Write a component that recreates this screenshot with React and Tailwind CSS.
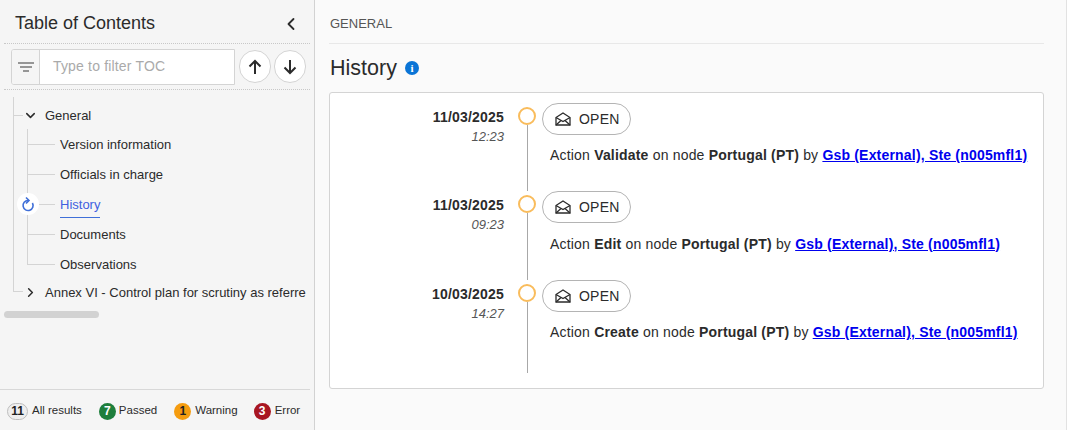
import React from "react";
import { ChevronLeft, ChevronDown, ChevronRight } from "lucide-react";

const children = ["Version information", "Officials in charge", "History", "Documents", "Observations"];

const entries = [
  { date: "11/03/2025", time: "12:23", action: "Validate", user: "Gsb (External), Ste (n005mfl1)", rowClass: "h-[88.5px]" },
  { date: "11/03/2025", time: "09:23", action: "Edit", user: "Gsb (External), Ste (n005mfl1)", rowClass: "h-[88.5px]" },
  { date: "10/03/2025", time: "14:27", action: "Create", user: "Gsb (External), Ste (n005mfl1)", rowClass: "h-[93px]" },
];

const badges = [
  { count: 11, label: "All results", cls: "w-[21px] bg-[#eeeeee] border border-[#bdbdbd] text-[#212121]", gap: "", labelGap: "ml-[4px]" },
  { count: 7, label: "Passed", cls: "w-[17px] bg-[#1e7e3c] text-white", gap: "ml-[17px]", labelGap: "ml-[3px]" },
  { count: 1, label: "Warning", cls: "w-[17px] bg-[#f59c0f] text-[#212121]", gap: "ml-[17px]", labelGap: "ml-[4px]" },
  { count: 3, label: "Error", cls: "w-[17px] bg-[#a81622] text-white", gap: "ml-[16px]", labelGap: "ml-[4px]" },
];

const RefreshIcon = () => (
  <svg width="14" height="16" viewBox="0 0 14 16" fill="none" stroke="#3f6fd8" strokeWidth="1.6">
    <path d="M7 4.5A5 5 0 1 0 11.4 7" />
    <path d="M5 1.5L8 4.5L5 7.5" />
  </svg>
);

const EnvelopeIcon = () => (
  <svg width="16" height="14" viewBox="0 0 16 14" fill="none" stroke="#2b2b2b" strokeWidth="1.3" className="shrink-0">
    <path d="M1 5.5L8 1L15 5.5V13H1Z" />
    <path d="M1 5.5L8 9.5L15 5.5" />
    <path d="M1 13L6 8.5M15 13L10 8.5" />
  </svg>
);

const ArrowIcon = ({ down }) => (
  <svg width="14" height="16" viewBox="0 0 14 16" fill="none" stroke="#2b2b2b" strokeWidth="2" className={down ? "rotate-180" : ""}>
    <path d="M7 15V2M1.5 7.5L7 2L12.5 7.5" />
  </svg>
);

const TreeChild = ({ label, isLast }) => {
  const active = label === "History";
  return (
    <div className="relative flex h-[30px] items-center">
      <span className={`absolute left-0 top-0 w-px bg-[#d4d4d4] ${isLast ? "h-[15px]" : "h-[30px]"}`} />
      <span className="h-px w-[28px] bg-[#d4d4d4]" />
      {active && (
        <span className="absolute left-[-10px] top-[4px] flex h-[22px] w-[22px] items-center justify-center rounded-full bg-white">
          <RefreshIcon />
        </span>
      )}
      <span
        className={`ml-[5px] text-[13px] leading-[21px] ${
          active ? "border-b border-[#3f6fd8] pb-[2px] pt-[3px] text-[#3f5fe0]" : "text-[#2b2b2b]"
        }`}
      >
        {label}
      </span>
    </div>
  );
};

const Sidebar = () => (
  <aside className="flex h-[430px] w-[315px] shrink-0 flex-col border-r border-[#d2d2d2] bg-[#f5f5f5]">
    <div className="mx-[4px] flex h-[44px] w-[306px] shrink-0 items-center justify-between border-b border-dotted border-[#c8c8c8] pl-[11px] pr-[9px] pt-[4px]">
      <span className="text-[18px] text-[#2b2b2b]">Table of Contents</span>
      <ChevronLeft size={20} strokeWidth={2.2} className="text-[#2b2b2b]" />
    </div>

    <div className="mx-[4px] flex h-[46px] w-[306px] shrink-0 items-center border-b border-dotted border-[#c8c8c8] pl-[7px]">
      <div className="flex h-[36px] w-[224px] overflow-hidden rounded-l-[3px] border border-[#d4d4d4] bg-white">
        <div className="flex w-[28px] items-center justify-center border-r border-[#d4d4d4] bg-[#f5f5f5]">
          <svg width="16" height="10" viewBox="0 0 16 10" className="text-[#777777]">
            <path d="M0 1h16M2 5h12M5 9h6" stroke="currentColor" strokeWidth="1.5" />
          </svg>
        </div>
        <span className="flex items-center pl-[13px] text-[14px] tracking-[0.17px] text-[#aaaaaa]">Type to filter TOC</span>
      </div>
      <button className="ml-[4px] flex h-[33px] w-[32px] items-center justify-center rounded-full border border-[#d4d4d4] bg-white">
        <ArrowIcon />
      </button>
      <button className="ml-[3px] flex h-[33px] w-[32px] items-center justify-center rounded-full border border-[#d4d4d4] bg-white">
        <ArrowIcon down />
      </button>
    </div>

    <div className="ml-[13px] mt-[7px] w-[296px] overflow-hidden">
      <div className="border-l border-[#d4d4d4]">
        <div className="flex h-[32px] items-center pt-[5px]">
          <span className="h-px w-[9px] bg-[#d4d4d4]" />
          <ChevronDown size={15} strokeWidth={2.4} className="text-[#2b2b2b]" />
          <span className="ml-[7px] text-[13px] text-[#2b2b2b]">General</span>
        </div>
        <div className="ml-[13px]">
          {children.map((label, i) => (
            <TreeChild key={label} label={label} isLast={i === children.length - 1} />
          ))}
        </div>
      </div>
      <div className="flex h-[27px] items-center whitespace-nowrap">
        <span className="h-[13px] w-[10px] self-start border-b border-l border-[#d4d4d4]" />
        <ChevronRight size={15} strokeWidth={2.4} className="text-[#2b2b2b]" />
        <span className="ml-[7px] text-[13px] text-[#2b2b2b]">Annex VI - Control plan for scrutiny as referre</span>
      </div>
    </div>

    <div className="ml-[4px] mt-[5px] h-[7px] w-[95px] shrink-0 rounded-full bg-[#d2d2d2]" />

    <div className="mt-auto flex h-[41px] w-[310px] shrink-0 items-center border-t border-[#d8d8d8] pl-[7px] pt-[2px]">
      {badges.map((b) => (
        <div key={b.label} className={`flex items-center ${b.gap}`}>
          <span className={`flex h-[17px] items-center justify-center rounded-full text-[12px] font-bold leading-none ${b.cls}`}>
            {b.count}
          </span>
          <span className={`${b.labelGap} text-[11.5px] text-[#2b2b2b]`}>{b.label}</span>
        </div>
      ))}
    </div>
  </aside>
);

const TimelineRow = ({ entry }) => (
  <div className={`flex ${entry.rowClass}`}>
    <div className="w-[174px] shrink-0 pt-[4px] text-right">
      <div className="text-[14px] font-bold leading-[20px] tracking-[0.2px] text-[#2b2b2b]">{entry.date}</div>
      <div className="text-[13px] italic leading-[20px] text-[#555555]">{entry.time}</div>
    </div>
    <div className="ml-[14px] flex w-[18px] shrink-0 flex-col items-center pt-[4px]">
      <span className="h-[18px] w-[18px] shrink-0 rounded-full border-2 border-[#f9bc5c] bg-white" />
      <span className="w-px flex-1 bg-[#a8a8a8]" />
    </div>
    <div className="ml-[6px]">
      <div className="flex h-[32px] w-[89px] items-center rounded-full border border-[#b4b4b4] pl-[12px]">
        <EnvelopeIcon />
        <span className="ml-[8px] pt-[0.6px] text-[14px] tracking-[0.2px] text-[#2b2b2b]">OPEN</span>
      </div>
      <div className="ml-[8px] mt-[10.2px] whitespace-nowrap text-[14px] leading-[20px] tracking-[0.19px] text-[#2b2b2b]">
        Action <b>{entry.action}</b> on node <b>Portugal (PT)</b> by{" "}
        <a href="#" className="font-bold text-[#0000ee] underline">{entry.user}</a>
      </div>
    </div>
  </div>
);

export default function App() {
  return (
    <div className="flex h-[430px] w-[1067px] overflow-hidden border-r border-[#e2e2e2] bg-[#fafafa] font-['Liberation_Sans',Arial,sans-serif]">
      <Sidebar />
      <main className="ml-[14px] w-[715px]">
        <div className="flex h-[44px] items-center border-b border-[#e8e8e8] pl-[1px] pt-[4px] text-[13px] text-[#555555]">GENERAL</div>
        <div className="flex h-[48px] items-center pl-[1px]">
          <h1 className="text-[21.5px] text-[#2b2b2b]">History</h1>
          <span className="ml-[8px] flex h-[14px] w-[14px] items-center justify-center rounded-full bg-[#0a74d6] font-['Liberation_Serif',serif] text-[11px] font-bold leading-none text-white">i</span>
        </div>
        <div className="h-[297px] rounded-[3px] border border-[#d4d4d4] bg-white pt-[9.9px]">
          {entries.map((entry, i) => (
            <TimelineRow key={i} entry={entry} />
          ))}
        </div>
      </main>
    </div>
  );
}
